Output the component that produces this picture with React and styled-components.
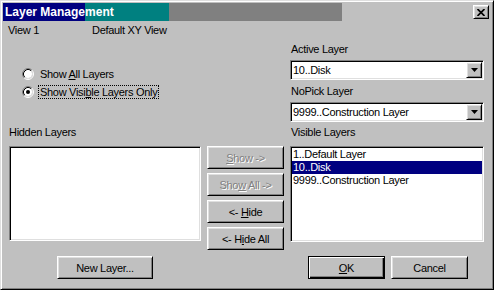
import React from "react";
import styled, { createGlobalStyle, css } from "styled-components";

const Global = createGlobalStyle`
  html, body { margin: 0; padding: 0; background: #c0c0c0; }
  body { font-family: "Liberation Sans", Arial, sans-serif; }
  * { box-sizing: border-box; }
`;

const raised = css`
  background: #c0c0c0;
  border: 1px solid;
  border-color: #fff #000 #000 #fff;
  box-shadow: inset 1px 1px #dfdfdf, inset -1px -1px #808080;
`;

const sunken = css`
  background: #fff;
  border: 1px solid;
  border-color: #808080 #fff #fff #808080;
  box-shadow: inset 1px 1px #000, inset -1px -1px #dfdfdf;
`;

const Window = styled.div`
  width: 494px;
  height: 290px;
  background: #c0c0c0;
  border: 1px solid;
  border-color: #dfdfdf #000 #000 #dfdfdf;
  box-shadow: inset 1px 1px #fff, inset -1px -1px #808080;
  padding: 2px;
  display: flex;
  flex-direction: column;
  font-family: "Liberation Sans", Arial, sans-serif;
  font-size: 11px;
  letter-spacing: -0.3px;
  color: #000;
  overflow: hidden;
`;

const TitleBar = styled.div`
  flex: none;
  height: 18px;
  display: flex;
  align-items: center;
  justify-content: space-between;
  padding: 0 2px;
  background: linear-gradient(
    to right,
    #000080 0 82px,
    #008080 82px 166px,
    #808080 166px 339px,
    #c0c0c0 339px
  );
`;

const Title = styled.span`
  color: #fff;
  font-weight: bold;
  font-size: 12px;
  letter-spacing: 0;
  line-height: 18px;
`;

const CloseButton = styled.button`
  ${raised}
  width: 16px;
  height: 14px;
  padding: 0;
  display: flex;
  align-items: center;
  justify-content: center;
`;

const Body = styled.div`
  flex: 1;
  display: flex;
  flex-direction: column;
  padding: 0 4px 0 5px;
`;

const Section = styled.div`
  display: grid;
  grid-template-columns: 276px 194px;
  column-gap: 6px;
  margin-top: ${(p) => p.$top || 0}px;
  height: ${(p) => p.$h}px;
`;

const Column = styled.div`
  display: flex;
  flex-direction: column;
`;

const ViewRow = styled.div`
  display: grid;
  grid-template-columns: 84px auto;
  line-height: 13px;
  margin-top: 3px;
`;

const RadioGroup = styled.div`
  display: flex;
  flex-direction: column;
  gap: 2px;
  margin-top: 29px;
  padding-left: 14px;
`;

const RadioRow = styled.label`
  display: flex;
  align-items: center;
  height: 16px;
  gap: 4px;
`;

const RadioLabel = styled.span`
  line-height: 12px;
  padding: 0 1px;
  border: 1px dotted ${(p) => (p.$focus ? "#000" : "transparent")};
`;

const FieldLabel = styled.div`
  line-height: 13px;
  margin-top: ${(p) => p.$top || 0}px;
  padding-left: ${(p) => p.$indent || 0}px;
`;

const Combo = styled.div`
  ${sunken}
  height: 20px;
  padding: 1px;
  display: flex;
  margin-top: ${(p) => p.$top || 0}px;
`;

const ComboText = styled.div`
  flex: 1;
  line-height: 16px;
  padding-left: 1px;
`;

const DropButton = styled.div`
  ${raised}
  width: 16px;
  height: 16px;
  display: flex;
  align-items: center;
  justify-content: center;
`;

const ListsRow = styled.div`
  display: flex;
  gap: 6px;
  padding-left: 1px;
`;

const ListBox = styled.div`
  ${sunken}
  width: ${(p) => p.$w}px;
  height: ${(p) => p.$h}px;
  padding: 1px;
`;

const ListItem = styled.div`
  line-height: 13px;
  padding-left: 1px;
  background: ${(p) => (p.$selected ? "#000080" : "transparent")};
  color: ${(p) => (p.$selected ? "#fff" : "#000")};
`;

const ButtonColumn = styled.div`
  display: flex;
  flex-direction: column;
  gap: 4px;
`;

const Button = styled.button`
  ${raised}
  width: ${(p) => p.$w}px;
  height: 23px;
  padding: 0;
  font: inherit;
  letter-spacing: inherit;
  color: ${(p) => (p.disabled ? "#808080" : "#000")};
  text-shadow: ${(p) => (p.disabled ? "1px 1px #fff" : "none")};
  ${(p) =>
    p.$default &&
    css`
      border-color: #000;
      box-shadow: inset 1px 1px #fff, inset -1px -1px #000,
        inset -2px -2px #808080;
    `}
`;

const BottomLeft = styled.div`
  padding-left: 49px;
`;

const BottomRight = styled.div`
  display: flex;
  gap: 6px;
  padding-left: 18px;
`;

function Radio({ checked }) {
  return (
    <svg width="12" height="12" viewBox="0 0 12 12">
      <circle cx="6" cy="6" r="4" fill="#fff" />
      <path d="M2.11 9.89 A5.5 5.5 0 0 1 9.89 2.11" fill="none" stroke="#808080" />
      <path d="M9.89 2.11 A5.5 5.5 0 0 1 2.11 9.89" fill="none" stroke="#fff" />
      <path d="M2.82 9.18 A4.5 4.5 0 0 1 9.18 2.82" fill="none" stroke="#000" />
      <path d="M9.18 2.82 A4.5 4.5 0 0 1 2.82 9.18" fill="none" stroke="#dfdfdf" />
      {checked && <circle cx="6" cy="6" r="2" fill="#000" />}
    </svg>
  );
}

function Arrow() {
  return (
    <svg width="7" height="4" viewBox="0 0 7 4">
      <path d="M0 0 H7 L3.5 4 Z" fill="#000" />
    </svg>
  );
}

export default function App() {
  return (
    <>
      <Global />
      <Window>
        <TitleBar>
          <Title>Layer Management</Title>
          <CloseButton aria-label="Close">
            <svg width="8" height="7" viewBox="0 0 8 7">
              <path d="M0.5 0 L7.5 7 M7.5 0 L0.5 7" stroke="#000" strokeWidth="1.7" />
            </svg>
          </CloseButton>
        </TitleBar>
        <Body>
          <Section $h={105}>
            <Column>
              <ViewRow>
                <span>View 1</span>
                <span>Default XY View</span>
              </ViewRow>
              <RadioGroup>
                <RadioRow>
                  <Radio />
                  <RadioLabel>
                    Show <u>A</u>ll Layers
                  </RadioLabel>
                </RadioRow>
                <RadioRow>
                  <Radio checked />
                  <RadioLabel $focus>
                    Show Visi<u>b</u>le Layers Only
                  </RadioLabel>
                </RadioRow>
              </RadioGroup>
            </Column>
            <Column>
              <FieldLabel $top={22} $indent={1}>Active Layer</FieldLabel>
              <Combo $top={4}>
                <ComboText>10..Disk</ComboText>
                <DropButton>
                  <Arrow />
                </DropButton>
              </Combo>
              <FieldLabel $top={5} $indent={1}>NoPick Layer</FieldLabel>
              <Combo $top={4}>
                <ComboText>9999..Construction Layer</ComboText>
                <DropButton>
                  <Arrow />
                </DropButton>
              </Combo>
            </Column>
          </Section>
          <Section $h={13}>
            <FieldLabel $indent={1}>Hidden Layers</FieldLabel>
            <FieldLabel $indent={1}>Visible Layers</FieldLabel>
          </Section>
          <Section $top={7} $h={104}>
            <ListsRow>
              <ListBox $w={192} $h={95} />
              <ButtonColumn>
                <Button $w={77} disabled>
                  <u>S</u>how -&gt;
                </Button>
                <Button $w={77} disabled>
                  Sho<u>w</u> All -&gt;
                </Button>
                <Button $w={77}>
                  &lt;- <u>H</u>ide
                </Button>
                <Button $w={77}>
                  &lt;- H<u>i</u>de All
                </Button>
              </ButtonColumn>
            </ListsRow>
            <ListBox $w={194} $h={96}>
              <ListItem>1..Default Layer</ListItem>
              <ListItem $selected>10..Disk</ListItem>
              <ListItem>9999..Construction Layer</ListItem>
            </ListBox>
          </Section>
          <Section $top={6} $h={23}>
            <BottomLeft>
              <Button $w={96}>New Layer...</Button>
            </BottomLeft>
            <BottomRight>
              <Button $w={77} $default>
                <u>O</u>K
              </Button>
              <Button $w={77}>Cancel</Button>
            </BottomRight>
          </Section>
        </Body>
      </Window>
    </>
  );
}
